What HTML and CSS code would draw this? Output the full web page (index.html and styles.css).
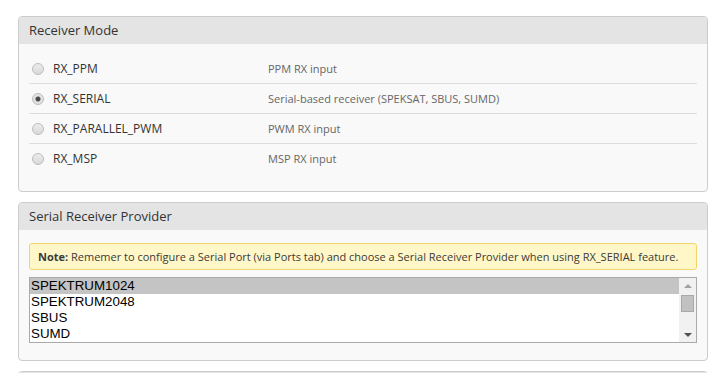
FILE: index.html
```html
<!DOCTYPE html>
<html lang="en">
<head>
    <meta charset="UTF-8">
    <meta name="viewport" content="width=device-width, initial-scale=1.0">
    <title>Receiver</title>
    <link rel="stylesheet" href="styles.css">
</head>
<body>
    <div class="page">
        <div class="gui-box">
            <div class="gui-box-title">Receiver Mode</div>
            <div class="gui-box-body">
                <div class="mode-row">
                    <label class="mode-name"><input type="radio" name="rxmode" class="mode-radio"> RX_PPM</label>
                    <span class="mode-desc">PPM RX input</span>
                </div>
                <div class="mode-row">
                    <label class="mode-name"><input type="radio" name="rxmode" class="mode-radio" checked> RX_SERIAL</label>
                    <span class="mode-desc">Serial-based receiver (SPEKSAT, SBUS, SUMD)</span>
                </div>
                <div class="mode-row">
                    <label class="mode-name"><input type="radio" name="rxmode" class="mode-radio"> RX_PARALLEL_PWM</label>
                    <span class="mode-desc">PWM RX input</span>
                </div>
                <div class="mode-row">
                    <label class="mode-name"><input type="radio" name="rxmode" class="mode-radio"> RX_MSP</label>
                    <span class="mode-desc">MSP RX input</span>
                </div>
            </div>
        </div>

        <div class="gui-box">
            <div class="gui-box-title">Serial Receiver Provider</div>
            <div class="gui-box-body provider-body">
                <div class="note"><strong>Note:</strong> Rememer to configure a Serial Port (via Ports tab) and choose a Serial Receiver Provider when using RX_SERIAL feature.</div>
                <div class="listbox">
                    <div class="listbox-items">
                        <div class="listbox-item selected">SPEKTRUM1024</div>
                        <div class="listbox-item">SPEKTRUM2048</div>
                        <div class="listbox-item">SBUS</div>
                        <div class="listbox-item">SUMD</div>
                    </div>
                    <div class="scrollbar">
                        <div class="scroll-arrow up"></div>
                        <div class="scroll-track">
                            <div class="scroll-thumb"></div>
                        </div>
                        <div class="scroll-arrow down"></div>
                    </div>
                </div>
            </div>
        </div>

        <div class="gui-box last-box">
            <div class="gui-box-title"></div>
        </div>
    </div>
</body>
</html>
```

FILE: styles.css
```css
html {
    overflow: hidden;
}
body {
    margin: 0;
    background: white;
    color: #333;
    font-family: "Open Sans", Arial, sans-serif;
}
.page {
    padding: 16px 20px 0 18px;
}
.gui-box {
    border: 1px solid #ccc;
    border-radius: 4px;
    background: #f9f9f9;
    margin-bottom: 10px;
    overflow: hidden;
}
.gui-box-title {
    background: #e4e4e4;
    height: 27px;
    line-height: 27px;
    padding-left: 10px;
    font-size: 13px;
}
.gui-box-body {
    padding: 10px 10px 18px 10px;
}
.mode-row {
    display: flex;
    align-items: center;
    height: 29px;
    border-bottom: 1px solid #ddd;
}
.mode-row:last-child {
    border-bottom: none;
}
.mode-name {
    display: flex;
    align-items: center;
    width: 239px;
    font-size: 12px;
    color: #333;
}
.mode-radio {
    appearance: none;
    box-sizing: border-box;
    width: 12px;
    height: 12px;
    margin: 0 9px 0 3px;
    border: 1px solid #bdbdbd;
    border-radius: 50%;
    background: linear-gradient(#ececec, #d9d9d9);
}
.mode-radio:checked {
    background: radial-gradient(circle, #4a4a4a 0, #4a4a4a 2px, #e2e2e2 3px);
}
.mode-desc {
    font-size: 11px;
    color: #666;
}
.provider-body {
    padding: 13px 10px 17px 10px;
}
.note {
    background: #fff7c8;
    border: 1px solid #f3d56a;
    border-radius: 3px;
    padding: 0 8px;
    height: 25px;
    line-height: 25px;
    font-size: 11px;
    color: #3a3a3a;
    margin-bottom: 7px;
}
.listbox {
    display: flex;
    height: 64px;
    border: 1px solid #aaa;
    background: white;
}
.listbox-items {
    flex: 1;
    font-family: "Liberation Sans", Arial, sans-serif;
    font-size: 13.33px;
    color: black;
}
.listbox-item {
    height: 16px;
    line-height: 16px;
    padding-left: 1px;
}
.listbox-item.selected {
    background: #c4c4c4;
}
.scrollbar {
    width: 17px;
    display: flex;
    flex-direction: column;
    background: #f1f1f1;
}
.scroll-arrow {
    height: 15px;
    display: flex;
    align-items: center;
    justify-content: center;
}
.scroll-arrow::before {
    content: "";
    border-left: 4px solid transparent;
    border-right: 4px solid transparent;
}
.scroll-arrow.up::before {
    border-bottom: 4px solid #a3a3a3;
}
.scroll-arrow.down::before {
    border-top: 4px solid #505050;
}
.scroll-track {
    flex: 1;
    padding: 2px 2px 0 2px;
}
.scroll-thumb {
    height: 15px;
    background: #c1c1c1;
    border: 1px solid #a9a9a9;
}
.last-box .gui-box-title {
    height: 40px;
}
```
